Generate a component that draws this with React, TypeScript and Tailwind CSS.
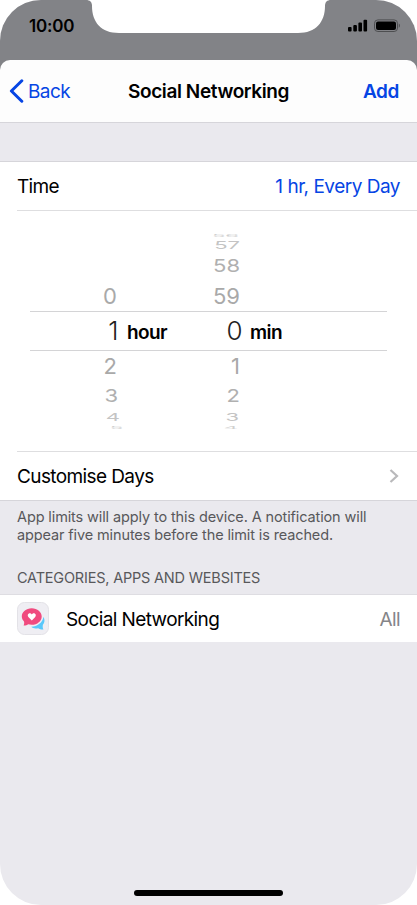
import React from 'react';

type WheelItem = {
  label: string;
  className: string;
};

const HOURS: WheelItem[] = [
  { label: '', className: 'h-[6px]' },
  { label: '', className: 'h-[12px]' },
  { label: '', className: 'h-[30px]' },
  { label: '0', className: 'h-[30px] pr-[8px] text-[#a9a9a9]' },
  { label: '', className: 'h-[40px]' },
  { label: '2', className: 'h-[30px] pr-[8px] text-[#a9a9a9]' },
  { label: '3', className: 'h-[30px] pr-[7px] text-[#b0b0b0] [&>span]:scale-y-80' },
  { label: '4', className: 'h-[12px] pr-[5px] text-[#c4c4c4] [&>span]:scale-y-50' },
  { label: '5', className: 'h-[7px] pr-[2px] pt-[2px] text-[#d0d0d0] [&>span]:scale-y-15' },
];

const MINUTES: WheelItem[] = [
  { label: '56', className: 'h-[6px] pr-[4px] text-[#d0d0d0] [&>span]:scale-y-15' },
  { label: '57', className: 'h-[12px] pr-[3px] text-[#c4c4c4] [&>span]:scale-y-50' },
  { label: '58', className: 'h-[30px] pr-[3px] text-[#b0b0b0] [&>span]:scale-y-80' },
  { label: '59', className: 'h-[30px] pr-[3px] text-[#a9a9a9]' },
  { label: '', className: 'h-[40px]' },
  { label: '1', className: 'h-[30px] pr-[3px] text-[#a9a9a9]' },
  { label: '2', className: 'h-[30px] pr-[3px] text-[#b0b0b0] [&>span]:scale-y-80' },
  { label: '3', className: 'h-[12px] pr-[4px] text-[#c4c4c4] [&>span]:scale-y-50' },
  { label: '4', className: 'h-[7px] pr-[5px] pt-[2px] text-[#d0d0d0] [&>span]:scale-y-15' },
];

function Wheel({ items }: { items: WheelItem[] }) {
  return (
    <div className="flex flex-col text-[22px] leading-none tracking-normal">
      {items.map((item, i) => (
        <div key={i} className={`flex shrink-0 items-center justify-end ${item.className}`}>
          <span className="block">{item.label}</span>
        </div>
      ))}
    </div>
  );
}

function StatusBar() {
  return (
    <div className="relative flex h-[60px] items-start justify-between bg-[#828387] pl-[29px] pr-[16px]">
      {/* Notch */}
      <svg className="absolute left-0 top-0" width="417" height="60" viewBox="0 0 417 60">
        <path
          d="M86 0C90 0 92 2 92 6C92 22 101 33 119 33H298C316 33 325 22 325 6C325 2 327 0 331 0Z"
          fill="#fff"
        />
      </svg>
      <span className="mt-[16px] text-[17px] font-semibold leading-5 tracking-[-0.2px]">10:00</span>
      <svg className="mt-[18px]" width="54" height="16" viewBox="0 0 54 16">
        <rect x="1" y="9" width="3.6" height="4.5" rx="1" />
        <rect x="6.3" y="7" width="3.6" height="6.5" rx="1" />
        <rect x="11.4" y="4.4" width="3.6" height="9.1" rx="1" />
        <rect x="16.5" y="1.8" width="3.6" height="11.7" rx="1" />
        <rect x="27.5" y="1.9" width="23" height="11.6" rx="3.4" fill="none" stroke="#4d4e50" />
        <rect x="29" y="3.4" width="20" height="8.6" rx="2" />
        <path d="M51.8 5.6C53.3 6.2 53.3 9.2 51.8 9.8Z" fill="#4d4e50" />
      </svg>
    </div>
  );
}

function SocialIcon() {
  return (
    <svg width="32" height="33" viewBox="0 0 32 33">
      <rect x="0.5" y="0.5" width="31" height="32" rx="7" fill="#efeef3" stroke="#e3e2e7" />
      <path
        d="M26.4 14.7C28.1 17.5 27.8 20.6 25.9 22.8C25.5 24.5 25.8 26.5 26.4 27.6C24.4 27.7 22.3 27 21.1 26.2C18.1 26.8 15.5 26.3 14.3 24.8C20.3 24.2 25.8 20.8 26.4 14.7Z"
        fill="#5ac8fa"
      />
      <path
        d="M14.7 6.2C20.4 6.2 24.7 9.9 24.7 14.5C24.7 19.1 20.4 22.8 14.7 22.8C13.5 22.8 12.4 22.6 11.3 22.3C10 23.2 8 23.7 6.6 23.5C7.2 22.1 7.4 20.6 7 19.4C5.6 18 4.8 16.4 4.8 14.5C4.8 9.9 9.1 6.2 14.7 6.2Z"
        fill="#f04b7f"
      />
      <path
        d="M14.8 18.6L11.6 15.2C10 13.5 11 11.2 12.8 11.2C13.8 11.2 14.5 11.8 14.8 12.5C15.1 11.8 15.8 11.2 16.8 11.2C18.6 11.2 19.6 13.5 18 15.2Z"
        fill="#fff"
      />
    </svg>
  );
}

export default function App() {
  return (
    <div className="h-[905px] w-[417px] overflow-hidden bg-white font-['Inter',sans-serif] text-black">
      <div className="relative flex h-full flex-col overflow-hidden rounded-[41px] bg-[#eae9ee]">
        <StatusBar />

        {/* Navigation bar */}
        <div className="bg-[#828387]">
          <header className="grid h-[63px] grid-cols-[1fr_auto_1fr] items-center rounded-t-[10px] border-b border-[#d6d5da] bg-[#fdfdfd] text-[19px]">
            <div className="flex items-center pl-[9px] text-[#0645e4]">
              <svg width="15" height="24" viewBox="0 0 15 24" fill="none" stroke="currentColor" strokeWidth="3" strokeLinecap="round" strokeLinejoin="round">
                <path d="M12.8 1.8L2.4 12L12.8 22.2" />
              </svg>
              <span className="ml-[4px] pt-[2px] tracking-[-0.6px]">Back</span>
            </div>
            <h1 className="pt-[2px] font-semibold tracking-[-0.4px]">Social Networking</h1>
            <span className="pr-[18px] pt-[2px] text-right font-semibold tracking-[-0.4px] text-[#0645e4]">Add</span>
          </header>
        </div>

        {/* Time limit */}
        <section className="mt-[38px] border-y border-[#d6d5da] bg-white text-[19px] tracking-[-0.6px]">
          <div className="ml-[17px] flex h-[49px] items-center justify-between border-b border-[#dedee0] pr-[17px] pt-[2px]">
            <span className="tracking-[-0.7px]">Time</span>
            <span className="tracking-[-0.5px] text-[#0645e4]">1 hr, Every Day</span>
          </div>
          <div className="relative h-[240px] px-[30px] pt-[22px]">
            <div className="grid grid-cols-[95px_118px]">
              <Wheel items={HOURS} />
              <Wheel items={MINUTES} />
            </div>
            <div className="absolute inset-x-[30px] top-[100px] grid h-[40px] grid-cols-[88px_1fr] items-center border-y border-[#d4d4d6]">
              <span className="text-right text-[26px] font-[350] leading-none text-[#222]">1</span>
              <div className="grid grid-cols-[124px_1fr] items-center">
                <div className="flex justify-between">
                  <span className="ml-[9px] self-center pt-[3px] font-semibold leading-none">hour</span>
                  <span className="text-[26px] font-[350] leading-none text-[#222]">0</span>
                </div>
                <span className="ml-[8px] pt-[3px] font-semibold leading-none">min</span>
              </div>
            </div>
          </div>
          <div className="ml-[17px] flex h-[49px] items-center justify-between border-t border-[#dedee0] pr-[18px]">
            <span className="pt-[2px]">Customise Days</span>
            <svg width="10" height="14" viewBox="0 0 10 14" fill="none" stroke="#b9b9bb" strokeWidth="2.2">
              <path d="M1.5 1L8 7L1.5 13" />
            </svg>
          </div>
        </section>

        <p className="ml-[17px] mt-[7px] text-[14.5px] leading-[18px] tracking-[-0.12px] text-[#58585b]">
          App limits will apply to this device. A notification will
          <br />
          appear five minutes before the limit is reached.
        </p>

        {/* Categories */}
        <h2 className="ml-[17px] mt-[25px] text-[14.5px] leading-[18px] tracking-[-0.2px] text-[#58585b]">
          CATEGORIES, APPS AND WEBSITES
        </h2>
        <section className="mt-[7px] flex h-[48px] items-center border-t border-[#dedde2] bg-white px-[17px] text-[19px] tracking-[-0.6px]">
          <SocialIcon />
          <span className="ml-[17px] grow pt-[3px]">Social Networking</span>
          <span className="pt-[3px] text-[#858588]">All</span>
        </section>

        <div className="mx-auto mb-[9px] mt-auto h-[6px] w-[149px] rounded-full bg-black" />
      </div>
    </div>
  );
}
